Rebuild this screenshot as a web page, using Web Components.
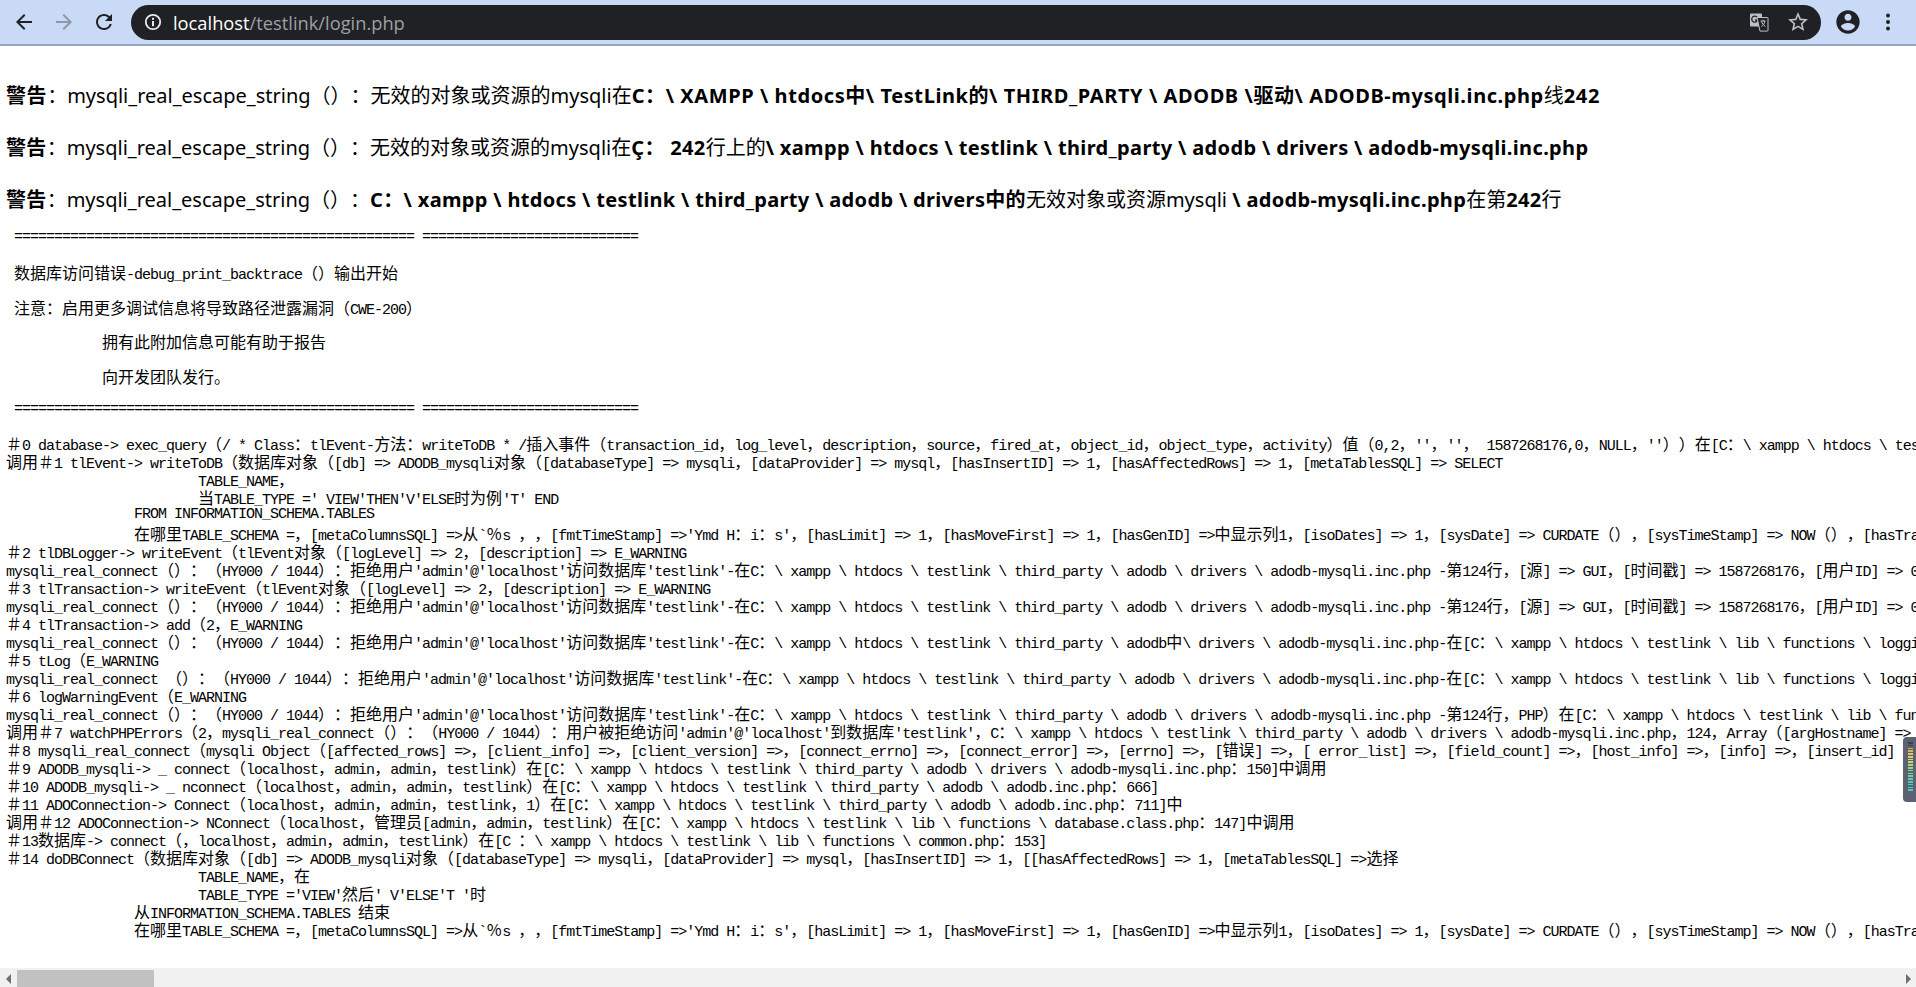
<!DOCTYPE html>
<html lang="zh">
<head>
<meta charset="utf-8">
<title>localhost/testlink/login.php</title>
<style>
  html, body { margin: 0; height: 100%; background: #fff; overflow: hidden; }
  body { display: flex; flex-direction: column; height: 987px; }
  .page { flex: 1; min-height: 0; overflow: hidden; padding: 24px 0 0 6px; }
</style>
</head>
<body>
<browser-bar url-host="localhost" url-path="/testlink/login.php"></browser-bar>
<div class="page">
  <php-warning style="--bold-gap:.58px"><b>警告</b>：mysqli_real_escape_string（）：无效的对象或资源的mysqli在<b>C：\ XAMPP \ htdocs中\ TestLink的\ THIRD_PARTY \ ADODB \驱动\ ADODB-mysqli.inc.php</b>线<b>242</b></php-warning>
  <php-warning style="--bold-gap:.35px"><b>警告</b>：mysqli_real_escape_string（）：无效的对象或资源的mysqli在<b>Ç： 242</b>行上的<b>\ xampp \ htdocs \ testlink \ third_party \ adodb \ drivers \ adodb-mysqli.inc.php</b></php-warning>
  <php-warning style="--bold-gap:.33px"><b>警告</b>：mysqli_real_escape_string（）：<b>C：\ xampp \ htdocs \ testlink \ third_party \ adodb \ drivers中的</b>无效对象或资源mysqli <b>\ adodb-mysqli.inc.php</b>在第<b>242</b>行</php-warning>
  <debug-banner></debug-banner>
  <debug-trace></debug-trace>
</div>
<page-scrollbar></page-scrollbar>
<level-meter></level-meter>

<script>
  // latin goes in the mono font, CJK runs get their own 16px span so the 8/16 grid holds
  const monoCss = `
    .m { height: 18px; font: 15px/18px "Liberation Mono", monospace; letter-spacing: -1px; white-space: pre; color: #000; text-spacing-trim: space-all; }
    .c { font: 16px/18px "Noto Sans CJK SC", sans-serif; letter-spacing: 0; }
  `;

  function monoHtml(text) {
    const esc = text.replace(/&/g, "&amp;").replace(/</g, "&lt;").replace(/>/g, "&gt;");
    return esc.replace(/[\u3000-\u9fff\uff00-\uffef]+/g, run => `<span class="c">${run}</span>`);
  }

  customElements.define(
    "browser-bar",
    class BrowserBar extends HTMLElement {
      constructor() {
        super();
        this.attachShadow({mode: "open"});
      }

      connectedCallback() {
        this.shadowRoot.innerHTML = `
        <style>
          :host { display: flex; align-items: center; flex: none; height: 44px; background: #c8daf5; border-bottom: 2px solid #97a6bf; font-family: "Open Sans", sans-serif; }
          svg { display: block; flex: none; }
          .nav { display: flex; align-items: center; gap: 16px; padding: 0 15px 0 12px; }
          .url { flex: 1; display: flex; align-items: center; height: 35px; border-radius: 18px; background: #202124; padding: 0 11px 0 12px; }
          .addr { flex: 1; margin-left: 10px; font-size: 18.3px; line-height: 35px; color: #9aa0a6; }
          .addr b { font-weight: 400; color: #fff; }
          .tail { display: flex; align-items: center; gap: 17px; }
          .side { display: flex; align-items: center; padding: 0 26px 0 13px; gap: 24px; }
        </style>
        <div class="nav">
          <svg width="24" height="24" viewBox="0 0 24 24" fill="#202124"><path d="M20 11H7.83l5.59-5.59L12 4l-8 8 8 8 1.41-1.41L7.83 13H20v-2z"/></svg>
          <svg width="24" height="24" viewBox="0 0 24 24" fill="#8c96a6"><path d="M4 11h12.17l-5.59-5.59L12 4l8 8-8 8-1.41-1.41L16.17 13H4v-2z"/></svg>
          <svg width="24" height="24" viewBox="0 0 24 24" fill="#202124"><path d="M17.65 6.35A7.958 7.958 0 0 0 12 4c-4.42 0-7.99 3.58-7.99 8s3.57 8 7.99 8c3.73 0 6.84-2.55 7.73-6h-2.08A5.99 5.99 0 0 1 12 18c-3.31 0-6-2.69-6-6s2.69-6 6-6c1.66 0 3.14.69 4.22 1.78L13 11h7V4l-2.35 2.35z"/></svg>
        </div>
        <div class="url">
          <svg width="20" height="20" viewBox="0 0 20 20"><circle cx="10" cy="10" r="7.2" fill="none" stroke="#e8eaed" stroke-width="1.8"/><rect x="9" y="9" width="2" height="5.2" fill="#e8eaed"/><rect x="9" y="5.8" width="2" height="2" fill="#e8eaed"/></svg>
          <div class="addr"><b>${this.getAttribute("url-host")}</b>${this.getAttribute("url-path")}</div>
          <div class="tail">
            <svg width="20" height="20" viewBox="0 0 20 20"><rect x="1" y="1.5" width="12" height="13" rx="1" fill="#bdc1c6"/><path d="M9.6 5.4A3 3 0 1 0 10 8H7.4" transform="translate(-1.4 0)" fill="none" stroke="#202124" stroke-width="1.3"/><path d="M8 5.5h10.2a.8.8 0 0 1 .8.8v12a.8.8 0 0 1-.8.8H11l-3-13.600z" fill="#202124" stroke="#bdc1c6" stroke-width="1"/><path d="M11.500 9h5M14 7.800V9M12.500 14.500c1.800-1 3-3 3.200-5.500M12.500 9.500c.6 2 2.200 4 4 5" fill="none" stroke="#bdc1c6" stroke-width="1"/></svg>
            <svg width="24" height="24" viewBox="0 0 24 24" fill="#bdc1c6"><path d="M22 9.240l-7.190-.62L12 2 9.190 8.630 2 9.240l5.460 4.730L5.820 21 12 17.270 18.180 21l-1.630-7.030L22 9.240zM12 15.400l-3.760 2.270 1-4.280-3.320-2.880 4.380-.38L12 6.100l1.710 4.040 4.380.38-3.320 2.880 1 4.280L12 15.400z"/></svg>
          </div>
        </div>
        <div class="side">
          <svg width="28" height="28" viewBox="0 0 24 24" fill="#202124"><path d="M12 2C6.480 2 2 6.480 2 12s4.480 10 10 10 10-4.480 10-10S17.520 2 12 2zm0 3c1.660 0 3 1.340 3 3s-1.340 3-3 3-3-1.340-3-3 1.340-3 3-3zm0 14.200c-2.500 0-4.710-1.280-6-3.220.03-1.990 4-3.080 6-3.080 1.990 0 5.970 1.090 6 3.080-1.290 1.940-3.500 3.220-6 3.220z"/></svg>
          <svg width="4" height="18" viewBox="0 0 4 18" fill="#202124"><circle cx="2" cy="2.500" r="2"/><circle cx="2" cy="9" r="2"/><circle cx="2" cy="15.500" r="2"/></svg>
        </div>
        `;
      }
    }
  );

  customElements.define(
    "php-warning",
    class PhpWarning extends HTMLElement {
      constructor() {
        super();
        this.attachShadow({mode: "open"});
      }

      connectedCallback() {
        this.shadowRoot.innerHTML = `
        <style>
          :host { display: block; height: 52px; font: 20px/52px "Noto Sans", "Noto Sans CJK SC", sans-serif; color: #000; white-space: nowrap; text-spacing-trim: space-all; }
          ::slotted(b) { letter-spacing: var(--bold-gap, 0); }
        </style>
        <slot></slot>
        `;
      }
    }
  );

  customElements.define(
    "debug-banner",
    class DebugBanner extends HTMLElement {
      constructor() {
        super();
        this.attachShadow({mode: "open"});
      }

      connectedCallback() {
        const rule = "=".repeat(50) + " " + "=".repeat(27);
        const rows = [
          [rule, false],
          ["数据库访问错误-debug_print_backtrace（）输出开始", false],
          ["注意：启用更多调试信息将导致路径泄露漏洞（CWE-200）", false],
          ["拥有此附加信息可能有助于报告", true],
          ["向开发团队发行。", true],
          [rule, false]
        ];
        this.shadowRoot.innerHTML = `
        <style>
          ${monoCss}
          :host { display: flex; flex-direction: column; gap: 16.4px; margin: 3px 0 15px; padding-left: 8px; }
          .in { padding-left: 88px; }
        </style>
        ${rows.map(([t, indent]) => `<div class="m${indent ? " in" : ""}">${monoHtml(t)}</div>`).join("")}
        `;
      }
    }
  );

  customElements.define(
    "debug-trace",
    class DebugTrace extends HTMLElement {
      constructor() {
        super();
        this.attachShadow({mode: "open"});
      }

      connectedCallback() {
        const denied = "mysqli_real_connect（）：（HY000 / 1044）：拒绝用户'admin'@'localhost'访问数据库'testlink'-在C：\\ xampp \\ htdocs \\ testlink \\ third_party \\ adodb";
        const sql = "[metaColumnsSQL] =>从`％s ，，[fmtTimeStamp] =>'Ymd H：i：s'，[hasLimit] => 1，[hasMoveFirst] => 1，[hasGenID] =>中显示列1，[isoDates] => 1，[sysDate] => CURDATE（），[sysTimeStamp] => NOW（），[hasTran";
        const lines = [
          "＃0 database-> exec_query（/ * Class：tlEvent-方法：writeToDB * /插入事件（transaction_id，log_level，description，source，fired_at，object_id，object_type，activity）值（0,2，''，''， 1587268176,0，NULL，''））在[C：\\ xampp \\ htdocs \\ tes",
          "调用＃1 tlEvent-> writeToDB（数据库对象（[db] => ADODB_mysqli对象（[databaseType] => mysqli，[dataProvider] => mysql，[hasInsertID] => 1，[hasAffectedRows] => 1，[metaTablesSQL] => SELECT",
          " ".repeat(24) + "TABLE_NAME，",
          " ".repeat(24) + "当TABLE_TYPE =' VIEW'THEN'V'ELSE时为例'T' END",
          " ".repeat(16) + "FROM INFORMATION_SCHEMA.TABLES",
          " ".repeat(16) + "在哪里TABLE_SCHEMA =，" + sql,
          "＃2 tlDBLogger-> writeEvent（tlEvent对象（[logLevel] => 2，[description] => E_WARNING",
          denied + " \\ drivers \\ adodb-mysqli.inc.php -第124行，[源] => GUI，[时间戳] => 1587268176，[用户ID] => 0",
          "＃3 tlTransaction-> writeEvent（tlEvent对象（[logLevel] => 2，[description] => E_WARNING",
          denied + " \\ drivers \\ adodb-mysqli.inc.php -第124行，[源] => GUI，[时间戳] => 1587268176，[用户ID] => 0",
          "＃4 tlTransaction-> add（2，E_WARNING",
          denied + "中\\ drivers \\ adodb-mysqli.inc.php-在[C：\\ xampp \\ htdocs \\ testlink \\ lib \\ functions \\ loggi",
          "＃5 tLog（E_WARNING",
          denied.replace("connect（）", "connect （）") + " \\ drivers \\ adodb-mysqli.inc.php-在[C：\\ xampp \\ htdocs \\ testlink \\ lib \\ functions \\ loggi",
          "＃6 logWarningEvent（E_WARNING",
          denied + " \\ drivers \\ adodb-mysqli.inc.php -第124行，PHP）在[C：\\ xampp \\ htdocs \\ testlink \\ lib \\ fun",
          "调用＃7 watchPHPErrors（2，mysqli_real_connect（）：（HY000 / 1044）：用户被拒绝访问'admin'@'localhost'到数据库'testlink'，C：\\ xampp \\ htdocs \\ testlink \\ third_party \\ adodb \\ drivers \\ adodb-mysqli.inc.php，124，Array（[argHostname] =>",
          "＃8 mysqli_real_connect（mysqli Object（[affected_rows] =>，[client_info] =>，[client_version] =>，[connect_errno] =>，[connect_error] =>，[errno] =>，[错误] =>，[ error_list] =>，[field_count] =>，[host_info] =>，[info] =>，[insert_id] =",
          "＃9 ADODB_mysqli-> _ connect（localhost，admin，admin，testlink）在[C：\\ xampp \\ htdocs \\ testlink \\ third_party \\ adodb \\ drivers \\ adodb-mysqli.inc.php：150]中调用",
          "＃10 ADODB_mysqli-> _ nconnect（localhost，admin，admin，testlink）在[C：\\ xampp \\ htdocs \\ testlink \\ third_party \\ adodb \\ adodb.inc.php：666]",
          "＃11 ADOConnection-> Connect（localhost，admin，admin，testlink，1）在[C：\\ xampp \\ htdocs \\ testlink \\ third_party \\ adodb \\ adodb.inc.php：711]中",
          "调用＃12 ADOConnection-> NConnect（localhost，管理员[admin，admin，testlink）在[C：\\ xampp \\ htdocs \\ testlink \\ lib \\ functions \\ database.class.php：147]中调用",
          "＃13数据库-> connect（，localhost，admin，admin，testlink）在[C ：\\ xampp \\ htdocs \\ testlink \\ lib \\ functions \\ common.php：153]",
          "＃14 doDBConnect（数据库对象（[db] => ADODB_mysqli对象（[databaseType] => mysqli，[dataProvider] => mysql，[hasInsertID] => 1，[[hasAffectedRows] => 1，[metaTablesSQL] =>选择",
          " ".repeat(24) + "TABLE_NAME，在",
          " ".repeat(24) + "TABLE_TYPE ='VIEW'然后' V'ELSE'T '时",
          " ".repeat(16) + "从INFORMATION_SCHEMA.TABLES 结束",
          " ".repeat(16) + "在哪里TABLE_SCHEMA =，" + sql
        ];
        this.shadowRoot.innerHTML = `
        <style>
          ${monoCss}
          :host { display: block; }
        </style>
        ${lines.map(t => `<div class="m">${monoHtml(t)}</div>`).join("")}
        `;
      }
    }
  );

  customElements.define(
    "page-scrollbar",
    class PageScrollbar extends HTMLElement {
      constructor() {
        super();
        this.attachShadow({mode: "open"});
      }

      connectedCallback() {
        this.shadowRoot.innerHTML = `
        <style>
          :host { display: flex; flex: none; height: 19px; background: #f1f1f1; align-items: flex-end; }
          .btn { flex: none; width: 17px; height: 17px; display: flex; align-items: center; justify-content: center; }
          .thumb { flex: none; width: 137px; height: 17px; background: #c1c1c1; }
          .rest { flex: 1; }
        </style>
        <div class="btn"><svg width="6" height="10" viewBox="0 0 6 10" fill="#6f6f6f"><path d="M5 0v10L0 5z"/></svg></div>
        <div class="thumb"></div>
        <div class="rest"></div>
        <div class="btn"><svg width="6" height="10" viewBox="0 0 6 10" fill="#6f6f6f"><path d="M1 0v10l5-5z"/></svg></div>
        `;
      }
    }
  );

  customElements.define(
    "level-meter",
    class LevelMeter extends HTMLElement {
      constructor() {
        super();
        this.attachShadow({mode: "open"});
      }

      connectedCallback() {
        const colors = ["#d9a05a", "#dfb25e", "#e0c264", "#dccf6a", "#d5d870", "#c6da74", "#b1d97a", "#9bd881", "#88d68b", "#76d496", "#68d2a2", "#5ecfae", "#56cdb8", "#50cbc0", "#4cc9c6", "#4ac7ca"];
        this.shadowRoot.innerHTML = `
        <style>
          :host { position: absolute; right: 0; top: 737px; width: 13px; height: 65px; box-sizing: border-box; padding: 5px 3px 0 5px; background: #5b6270; border-radius: 4px 0 0 4px; display: flex; flex-direction: column; gap: 1.200px; }
          i { display: block; height: 1.600px; flex: none; }
          .g { background: #3b404a; }
        </style>
        <i class="g"></i><i class="g"></i>
        ${colors.map(c => `<i style="background:${c}"></i>`).join("")}
        `;
      }
    }
  );
</script>
</body>
</html>
